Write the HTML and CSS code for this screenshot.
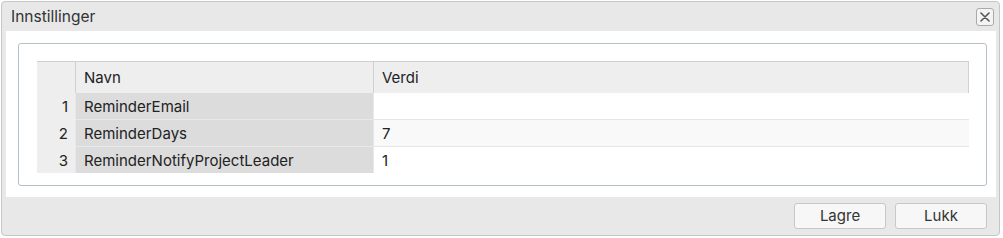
FILE: index.html
```html
<!DOCTYPE html>
<html lang="nb">
<head>
  <meta charset="UTF-8">
  <meta name="viewport" content="width=device-width, initial-scale=1.0">
  <title>Innstillinger</title>
  <link rel="stylesheet" href="styles.css">
</head>
<body>
  <div class="dialog">
    <div class="titlebar">
      <span class="title">Innstillinger</span>
      <button class="close" title="Lukk">
        <svg width="10" height="10" viewBox="0 0 10 10">
          <path d="M1 1 L9 9 M9 1 L1 9" stroke="#555" stroke-width="1.6" stroke-linecap="round"/>
        </svg>
      </button>
    </div>

    <div class="content">
      <div class="box">
        <table class="grid">
          <thead>
            <tr>
              <th class="num"></th>
              <th class="name">Navn</th>
              <th>Verdi</th>
            </tr>
          </thead>
          <tbody>
            <tr>
              <td class="num">1</td>
              <td class="name">ReminderEmail</td>
              <td></td>
            </tr>
            <tr class="alt">
              <td class="num">2</td>
              <td class="name">ReminderDays</td>
              <td>7</td>
            </tr>
            <tr>
              <td class="num">3</td>
              <td class="name">ReminderNotifyProjectLeader</td>
              <td>1</td>
            </tr>
          </tbody>
        </table>
      </div>
    </div>

    <div class="footer">
      <button class="button">Lagre</button>
      <button class="button">Lukk</button>
    </div>
  </div>
</body>
</html>
```

FILE: styles.css
```css
body {
  font-family: Inter, "Noto Sans", sans-serif;
  font-size: 15px;
  color: #222;
  background-color: #fff;
  margin: 0;
  padding: 0;
}
.dialog {
  margin: 1px;
  width: 997px;
  height: 233px;
  border: 1px solid #c6c6c6;
  border-radius: 4px;
  background-color: #e8e8e8;
  display: flex;
  flex-direction: column;
}
.titlebar {
  height: 29px;
  display: flex;
  align-items: center;
  justify-content: space-between;
  padding: 0 5px 0 9px;
}
.title {
  font-size: 15.5px;
  color: #333;
}
.close {
  width: 18px;
  height: 18px;
  padding: 0;
  border: 1px solid #aaa;
  border-radius: 3px;
  background-color: #f4f4f4;
  display: flex;
  align-items: center;
  justify-content: center;
  cursor: pointer;
}
.content {
  margin: 0 3px 0 4px;
  padding: 12px 9px 11px 12px;
  background-color: #fff;
}
.box {
  border: 1px solid #b4c0c6;
  border-radius: 3px;
  padding: 17px 17px 12px 18px;
}
.grid {
  width: 100%;
  border-collapse: collapse;
  font-size: 15px;
}
.grid th {
  height: 31px;
  text-align: left;
  font-weight: normal;
  padding: 0 8px;
  background-color: #eeeeee;
  border-top: 1px solid #d0d0d0;
  border-left: 1px solid #d0d0d0;
}
.grid th:last-child {
  border-right: 1px solid #d0d0d0;
}
.grid th.num {
  border-left: none;
  width: 22px;
}
.grid td {
  height: 26px;
  padding: 0 8px;
  border-bottom: 1px solid #e6e6e6;
}
.grid td.num {
  text-align: right;
  padding: 0 7px 0 8px;
  background-color: #eeeeee;
  border-bottom: 1px solid #eeeeee;
}
.grid td.name {
  width: 281px;
  background-color: #dcdcdc;
  border-left: 1px solid #e8e8e8;
  border-right: 1px solid #e8e8e8;
  border-bottom: 1px solid #e8e8e8;
}
.grid tr:last-child td {
  border-bottom: none;
}
.grid tr.alt td:last-child {
  background-color: #f9f9f9;
}
.footer {
  flex: 1;
  display: flex;
  justify-content: flex-end;
  align-items: center;
  gap: 9px;
  padding: 0 12px 1px 0;
}
.button {
  width: 92px;
  height: 26px;
  font-family: Inter, "Noto Sans", sans-serif;
  font-size: 15px;
  color: #333;
  border: 1px solid #c8c8c8;
  border-radius: 3px;
  background-color: #f7f7f7;
  cursor: pointer;
}
.button:hover {
  background-color: #eee;
}
```
